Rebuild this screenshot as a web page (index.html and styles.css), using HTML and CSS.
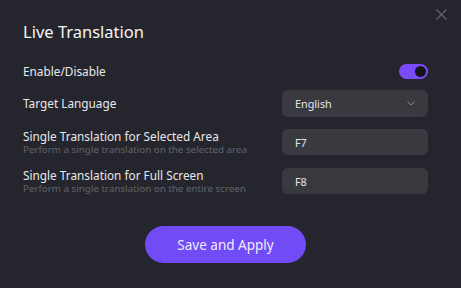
FILE: index.html
```html
<!DOCTYPE html>
<html lang="en">
<head>
  <meta charset="UTF-8">
  <title>Live Translation</title>
  <link rel="stylesheet" href="styles.css">
</head>
<body>
  <div class="dialog">
    <button class="close" aria-label="Close">
      <svg width="11" height="11" viewBox="0 0 11 11">
        <path d="M0.5 0.5 L10.5 10.5 M10.5 0.5 L0.5 10.5" stroke="#5f6066" stroke-width="1.4" fill="none"/>
      </svg>
    </button>

    <h2>Live Translation</h2>

    <div class="row row-toggle">
      <div class="label">Enable/Disable</div>
      <div class="toggle on"><span class="knob"></span></div>
    </div>

    <div class="row">
      <div class="label">Target Language</div>
      <div class="field select">
        <span>English</span>
        <svg width="8" height="5" viewBox="0 0 8 5">
          <path d="M0.5 0.5 L4 4 L7.5 0.5" stroke="#8a8b92" stroke-width="1" fill="none"/>
        </svg>
      </div>
    </div>

    <div class="row">
      <div class="label">
        <div>Single Translation for Selected Area</div>
        <div class="hint">Perform a single translation on the selected area</div>
      </div>
      <div class="field">F7</div>
    </div>

    <div class="row">
      <div class="label">
        <div>Single Translation for Full Screen</div>
        <div class="hint">Perform a single translation on the entire screen</div>
      </div>
      <div class="field">F8</div>
    </div>

    <div class="actions">
      <button class="primary">Save and Apply</button>
    </div>
  </div>
</body>
</html>
```

FILE: styles.css
```css
* {
  box-sizing: border-box;
}

html, body {
  margin: 0;
  padding: 0;
  height: 100%;
}

body {
  font-family: "Noto Sans", "Open Sans", sans-serif;
  background: #25262d;
  color: #e6e6ea;
}

.dialog {
  position: relative;
  height: 100%;
  padding: 20px 33px 0 23px;
}

.close {
  position: absolute;
  top: 9px;
  right: 14px;
  background: none;
  border: none;
  padding: 0;
  cursor: pointer;
  line-height: 0;
}

h2 {
  margin: 0 0 14px;
  font-size: 16.5px;
  font-weight: 400;
  line-height: 24px;
  color: #f4f4f6;
}

.row {
  display: flex;
  justify-content: space-between;
  align-items: center;
  height: 26px;
  margin-bottom: 13px;
}

.row-toggle {
  margin-bottom: 6px;
}

.label {
  font-size: 11.8px;
  line-height: 15px;
  color: #e8e8ec;
}

.hint {
  font-size: 9.8px;
  line-height: 12px;
  color: #62636b;
}

.toggle {
  width: 29px;
  height: 15px;
  border-radius: 8px;
  background: #7a4cf9;
  position: relative;
}

.toggle .knob {
  position: absolute;
  top: 2px;
  right: 2px;
  width: 11px;
  height: 11px;
  border-radius: 50%;
  background: #15151a;
}

.field {
  width: 146px;
  height: 26px;
  border-radius: 6px;
  background: #393a40;
  padding: 0 13px;
  display: flex;
  align-items: center;
  font-size: 10.8px;
  color: #e6e6ea;
}

.select {
  height: 27px;
  justify-content: space-between;
}

.actions {
  display: flex;
  justify-content: center;
  margin-top: 32px;
}

.primary {
  width: 161px;
  height: 37px;
  border: none;
  border-radius: 19px;
  background: #714bf6;
  color: #f0ecff;
  font-family: "Noto Sans", "Open Sans", sans-serif;
  font-size: 13.5px;
  cursor: pointer;
}
```
